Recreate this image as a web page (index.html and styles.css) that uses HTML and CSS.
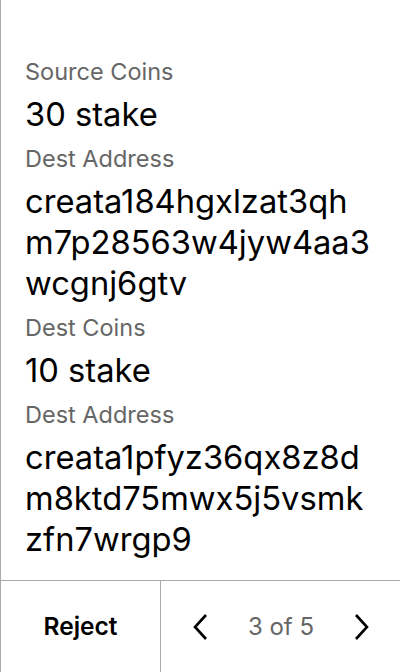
FILE: index.html
```html
<!DOCTYPE html>
<html>
<head>
<meta charset="utf-8">
<link rel="stylesheet" href="styles.css">
</head>
<body>
<div class="screen">
  <div class="content">
    <div class="field">
      <div class="label">Source Coins</div>
      <div class="value">30 stake</div>
    </div>
    <div class="field">
      <div class="label">Dest Address</div>
      <div class="value">creata184hgxlzat3qh<br>m7p28563w4jyw4aa3<br>wcgnj6gtv</div>
    </div>
    <div class="field">
      <div class="label">Dest Coins</div>
      <div class="value">10 stake</div>
    </div>
    <div class="field">
      <div class="label">Dest Address</div>
      <div class="value">creata1pfyz36qx8z8d<br>m8ktd75mwx5j5vsmk<br>zfn7wrgp9</div>
    </div>
  </div>
  <div class="footer">
    <div class="reject">Reject</div>
    <div class="pager">
      <svg class="chev" width="16" height="28" viewBox="0 0 16 28"><path d="M13 2 L2 14 L13 26" fill="none" stroke="#000" stroke-width="2.6"/></svg>
      <span class="count">3 of 5</span>
      <svg class="chev" width="16" height="28" viewBox="0 0 16 28"><path d="M3 2 L14 14 L3 26" fill="none" stroke="#000" stroke-width="2.6"/></svg>
    </div>
  </div>
</div>
</body>
</html>
```
FILE: styles.css
```css
html, body {
  margin: 0;
  padding: 0;
  background: #fff;
}
body {
  font-family: Inter, "Noto Sans", sans-serif;
  color: #000;
}
.screen {
  width: 399px;
  height: 672px;
  border-left: 1px solid #aaa;
  display: flex;
  flex-direction: column;
  overflow: hidden;
}
.content {
  flex: 1;
  padding: 58px 24px 0 24px;
  display: flex;
  flex-direction: column;
  gap: 10.5px;
}
.field {
  display: flex;
  flex-direction: column;
  gap: 7.5px;
}
.label {
  font-size: 23.5px;
  line-height: 28px;
  color: #666;
}
.value {
  font-size: 32.7px;
  line-height: 41px;
  white-space: nowrap;
}
.footer {
  height: 91px;
  border-top: 1px solid #aaa;
  display: flex;
}
.reject {
  width: 159px;
  border-right: 1px solid #aaa;
  display: flex;
  align-items: center;
  justify-content: center;
  font-size: 24.5px;
  font-weight: 600;
  padding-bottom: 2px;
}
.pager {
  flex: 1;
  display: flex;
  align-items: center;
  justify-content: space-between;
  padding: 0 31px 0 32px;
}
.count {
  font-size: 24px;
  color: #666;
}
.chev {
  display: block;
}
```
